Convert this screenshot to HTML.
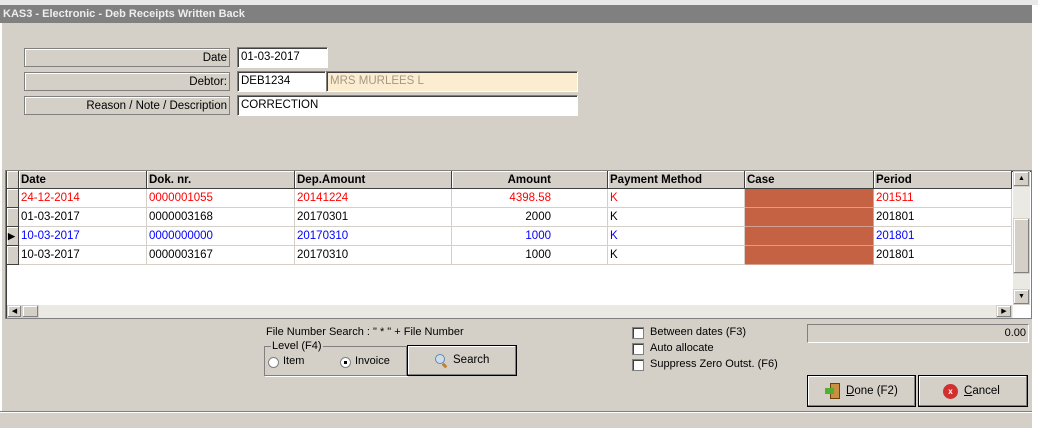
<!DOCTYPE html><html><head><style>
*{margin:0;padding:0;box-sizing:border-box}
body{width:1038px;height:428px;background:#d4d0c8;font-family:"Liberation Sans",sans-serif;font-size:12px;position:relative;overflow:hidden;color:#000}
.a{position:absolute;white-space:nowrap}
.lbl{border:1px solid #808080;box-shadow:inset 1px 1px #fff;background:#d4d0c8;text-align:right;padding-right:2px;line-height:18px;font-size:11.5px}
.inp{background:#fff;border:1px solid #808080;border-right-color:#fff;border-bottom-color:#fff;box-shadow:inset 1px 1px #404040;line-height:19px;padding-left:3px;font-size:11.5px}
.hd{font-weight:bold;line-height:18px;padding-left:2px;border-right:1px solid #404040;border-bottom:1px solid #404040;box-shadow:inset 1px 1px #fff;background:#d4d0c8;font-size:11.5px}
.c{line-height:19px;padding-left:2px;border-right:1px solid #d4d0c8;border-bottom:1px solid #d4d0c8;background:#fff;font-size:11.5px}
.btn{border:1px solid #000;box-shadow:inset -1px -1px #808080,inset 1px 1px #fff;background:#d4d0c8;font-size:11.5px}
.chk{width:12px;height:12px;background:#fff;border:1px solid #808080;box-shadow:inset 1px 1px #404040}
</style></head><body>
<div class="a" style="left:0;top:0;width:1038px;height:5px;background:#e8e8e8"></div>
<div class="a" style="left:0;top:5px;width:1032px;height:18px;background:#808080;color:#eee;font-weight:bold;font-size:11px;line-height:18px;padding-left:3px">KAS3 - Electronic - Deb Receipts Written Back</div>
<div class="a" style="left:1032px;top:5px;width:6px;height:423px;background:#fff"></div>
<div class="a" style="left:0;top:23px;width:2px;height:390px;background:#fff"></div>
<div class="a" style="left:0;top:411px;width:1032px;height:1px;background:#808080"></div>
<div class="a" style="left:0;top:412px;width:1032px;height:1px;background:#fff"></div>

<div class="a lbl" style="left:24px;top:48px;width:206px;height:19px">Date</div>
<div class="a inp" style="left:237px;top:47px;width:91px;height:21px">01-03-2017</div>
<div class="a lbl" style="left:24px;top:72px;width:206px;height:19px">Debtor:</div>
<div class="a inp" style="left:237px;top:71px;width:89px;height:21px">DEB1234</div>
<div class="a inp" style="left:326px;top:71px;width:252px;height:21px;background:#fdedd0;color:#a09888">MRS MURLEES L</div>
<div class="a lbl" style="left:24px;top:96px;width:206px;height:19px">Reason / Note / Description</div>
<div class="a inp" style="left:237px;top:95px;width:341px;height:21px">CORRECTION</div>

<div class="a" style="left:5px;top:170px;width:1027px;height:149px;background:#fff;border:1px solid #808080;box-shadow:inset 1px 1px #404040"></div>
<div class="a hd" style="left:7px;top:171px;width:12px;height:18px"></div>
<div class="a hd" style="left:19px;top:171px;width:128px;height:18px">Date</div>
<div class="a hd" style="left:147px;top:171px;width:148px;height:18px">Dok. nr.</div>
<div class="a hd" style="left:295px;top:171px;width:157px;height:18px">Dep.Amount</div>
<div class="a hd" style="left:452px;top:171px;width:156px;height:18px;text-align:right;padding-right:56px">Amount</div>
<div class="a hd" style="left:608px;top:171px;width:137px;height:18px">Payment Method</div>
<div class="a hd" style="left:745px;top:171px;width:129px;height:18px">Case</div>
<div class="a hd" style="left:874px;top:171px;width:138px;height:18px">Period</div>
<div id="rows"></div>
<script>
var R=[["24-12-2014","0000001055","20141224","4398.58","K","201511","#f00"],["01-03-2017","0000003168","20170301","2000","K","201801","#000"],["10-03-2017","0000000000","20170310","1000","K","201801","#00f"],["10-03-2017","0000003167","20170310","1000","K","201801","#000"]];
var h="";R.forEach(function(r,i){var y=189+i*19,c=r[6];
h+='<div class="a hd" style="left:7px;top:'+y+'px;width:12px;height:19px">'+(i==2?'<span style="font-size:9px;position:relative;left:-1px">&#9654;</span>':'')+'</div>';
h+='<div class="a c" style="left:19px;top:'+y+'px;width:128px;height:19px;color:'+c+'">'+r[0]+'</div>';
h+='<div class="a c" style="left:147px;top:'+y+'px;width:148px;height:19px;color:'+c+'">'+r[1]+'</div>';
h+='<div class="a c" style="left:295px;top:'+y+'px;width:157px;height:19px;color:'+c+'">'+r[2]+'</div>';
h+='<div class="a c" style="left:452px;top:'+y+'px;width:156px;height:19px;color:'+c+';text-align:right;padding-right:56px">'+r[3]+'</div>';
h+='<div class="a c" style="left:608px;top:'+y+'px;width:137px;height:19px;color:'+c+'">'+r[4]+'</div>';
h+='<div class="a c" style="left:745px;top:'+y+'px;width:129px;height:19px;background:#c56244;border-color:#d4a090"></div>';
h+='<div class="a c" style="left:874px;top:'+y+'px;width:138px;height:19px;color:'+c+'">'+r[5]+'</div>';});
document.getElementById('rows').innerHTML=h;
</script>
<div class="a" style="left:1013px;top:171px;width:17px;height:134px;background:#ebe9e4"></div>
<div class="a btn" style="left:1013px;top:171px;width:17px;height:16px;border-color:#d4d0c8;font-size:7px;text-align:center;line-height:14px">&#9650;</div>
<div class="a btn" style="left:1013px;top:218px;width:17px;height:56px;border-color:#d4d0c8"></div>
<div class="a btn" style="left:1013px;top:289px;width:17px;height:16px;border-color:#d4d0c8;font-size:7px;text-align:center;line-height:14px">&#9660;</div>
<div class="a" style="left:7px;top:305px;width:1006px;height:13px;background:#ebe9e4"></div>
<div class="a btn" style="left:7px;top:305px;width:15px;height:13px;border-color:#d4d0c8;font-size:7px;text-align:center;line-height:11px">&#9664;</div>
<div class="a btn" style="left:22px;top:305px;width:17px;height:13px;border-color:#d4d0c8"></div>
<div class="a btn" style="left:996px;top:305px;width:16px;height:13px;border-color:#d4d0c8;font-size:7px;text-align:center;line-height:11px">&#9654;</div>

<div class="a" style="left:266px;top:326px;font-size:11px">File Number Search : " * " + File Number</div>
<div class="a" style="left:264px;top:346px;width:143px;height:30px;border:1px solid #808080;box-shadow:1px 1px #fff"></div>
<div class="a" style="left:271px;top:340px;font-size:11px;background:#d4d0c8;padding:0 1px">Level (F4)</div>
<div class="a" style="left:268px;top:357px;width:11px;height:11px;border-radius:50%;background:#fff;border:1px solid #808080"></div>
<div class="a" style="left:283px;top:355px;font-size:11px">Item</div>
<div class="a" style="left:340px;top:357px;width:11px;height:11px;border-radius:50%;background:#fff;border:1px solid #808080"><div style="width:3px;height:3px;background:#000;margin:3px"></div></div>
<div class="a" style="left:355px;top:355px;font-size:11px">Invoice</div>
<div class="a btn" style="left:407px;top:345px;width:110px;height:31px;font-size:11.5px;line-height:28px;padding-left:45px"><span style="position:absolute;left:27px;top:8px;width:10px;height:10px;border-radius:50%;background:#cde;border:1px solid #68a"></span><span style="position:absolute;left:35px;top:17px;width:3px;height:5px;background:#c08030;transform:rotate(-45deg)"></span>Search</div>

<div class="a chk" style="left:632px;top:327px"></div><div class="a" style="left:650px;top:326px;font-size:11px">Between dates (F3)</div>
<div class="a chk" style="left:632px;top:343px"></div><div class="a" style="left:650px;top:342px;font-size:11px">Auto allocate</div>
<div class="a chk" style="left:632px;top:359px"></div><div class="a" style="left:650px;top:358px;font-size:11px">Suppress Zero Outst. (F6)</div>
<div class="a" style="left:807px;top:324px;width:222px;height:19px;border:1px solid #808080;border-right-color:#fff;border-bottom-color:#fff;text-align:right;padding-right:2px;line-height:17px;font-size:11px">0.00</div>
<div class="a btn" style="left:807px;top:375px;width:109px;height:32px;line-height:30px;padding-left:38px;font-size:11.5px"><span style="position:absolute;left:22px;top:7px;width:10px;height:16px;background:#c89040;border:1px solid #704010"></span><span style="position:absolute;left:17px;top:12px;width:9px;height:6px;background:#50b030"></span><u>D</u>one (F2)</div>
<div class="a btn" style="left:918px;top:375px;width:110px;height:32px;line-height:30px;padding-left:45px;font-size:11.5px"><span style="position:absolute;left:24px;top:8px;width:15px;height:15px;border-radius:50%;background:#d03030;color:#fff;font-size:8px;line-height:15px;text-align:center;font-weight:bold">x</span><u>C</u>ancel</div>
</body></html>
